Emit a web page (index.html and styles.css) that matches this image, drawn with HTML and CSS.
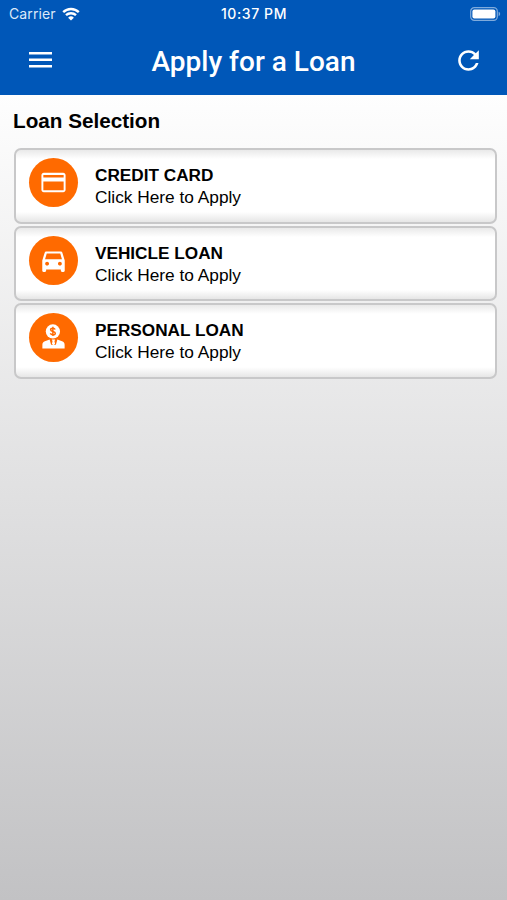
FILE: index.html
```html
<!DOCTYPE html>
<html lang="en">
<head>
    <meta charset="UTF-8">
    <meta name="viewport" content="width=device-width, initial-scale=1"/>
    <title>Apply for a Loan</title>
    <link rel="stylesheet" href="styles.css">
</head>
<body>
    <header class="header">
        <div class="status-bar">
            <div class="carrier">
                <span>Carrier</span>
                <svg class="wifi" viewBox="0 0 18 14">
                    <path d="M1.2 5.2a11.2 11.2 0 0 1 15.6 0M4 8.2a7.2 7.2 0 0 1 10 0"/>
                    <path class="wifi-dot" d="M9 13.6L6.1 10.7a4.1 4.1 0 0 1 5.8 0z"/>
                </svg>
            </div>
            <span class="time">10:37 PM</span>
            <div class="battery-wrap">
                <svg class="battery" viewBox="0 0 31 14">
                    <rect class="battery-case" x="0.7" y="0.7" width="26.6" height="12.6" rx="3.6"/>
                    <rect x="2.4" y="2.4" width="23" height="9.2" rx="2"/>
                    <path class="battery-tip" d="M28.6 4.8q1.6.6 1.6 2.2t-1.6 2.2z"/>
                </svg>
            </div>
        </div>
        <nav class="nav-bar">
            <a class="nav-btn" href="#" aria-label="Menu">
                <svg class="icon-menu" viewBox="0 0 23 16"><path d="M0 0h23v2.6H0zM0 6.5h23v2.6H0zM0 13h23v2.6H0z"/></svg>
            </a>
            <h1 class="title">Apply for a Loan</h1>
            <a class="nav-btn" href="#" aria-label="Refresh">
                <svg class="icon-refresh" viewBox="0 0 24 24"><path d="M17.65 6.35C16.2 4.9 14.21 4 12 4c-4.42 0-7.99 3.58-7.99 8s3.57 8 7.99 8c3.73 0 6.84-2.55 7.73-6h-2.08c-.82 2.33-3.04 4-5.65 4-3.31 0-6-2.69-6-6s2.69-6 6-6c1.66 0 3.14.69 4.22 1.78L13 11h7V4l-2.35 2.35z"/></svg>
            </a>
        </nav>
    </header>

    <main class="content">
        <h2 class="section-title">Loan Selection</h2>
        <ul class="loan-list">
            <li class="loan-item">
                <span class="loan-icon">
                    <svg viewBox="0 0 24 24"><path d="M20 4H4c-1.11 0-1.99.89-1.99 2L2 18c0 1.11.89 2 2 2h16c1.11 0 2-.89 2-2V6c0-1.11-.89-2-2-2zm.4 14.4H3.6V11.2h16.8v7.2zm0-10.600H3.600V5.800h16.800v2z"/></svg>
                </span>
                <div class="loan-text">
                    <strong class="loan-name">CREDIT CARD</strong>
                    <span class="loan-hint">Click Here to Apply</span>
                </div>
            </li>
            <li class="loan-item">
                <span class="loan-icon">
                    <svg viewBox="0 0 24 24"><path d="M19.300 5.400C19.100 4.900 18.600 4.500 17.900 4.500H6.100c-.66 0-1.200.4-1.400 1L2.700 12v8.500c0 .55.450 1 1 1h1.200c.55 0 1-.450 1-1v-1h12.200v1c0 .55.450 1 1 1h1.200c.55 0 1-.450 1-1V12l-2-6.600zM6.700 16.200c-.9 0-1.600-.7-1.600-1.600s.7-1.600 1.600-1.600 1.600.7 1.600 1.600-.7 1.600-1.600 1.600zm10.600 0c-.9 0-1.600-.7-1.600-1.600s.7-1.600 1.600-1.600 1.600.7 1.600 1.600-.7 1.600-1.600 1.600zM5 11l1.400-4.700h11.200L19 11H5z"/></svg>
                </span>
                <div class="loan-text">
                    <strong class="loan-name">VEHICLE LOAN</strong>
                    <span class="loan-hint">Click Here to Apply</span>
                </div>
            </li>
            <li class="loan-item">
                <span class="loan-icon">
                    <svg viewBox="0 0 24 24">
                        <circle cx="11.5" cy="7" r="5.9"/>
                        <path class="coin-sign" d="M13.4 5.4C13 4.5 12.3 4.300 11.500 4.300c-1.100 0-1.900.5-1.900 1.300 0 1.900 3.900.9 3.900 2.800 0 .8-.8 1.300-2 1.300-1 0-1.800-.4-2.100-1.200M11.500 3.200v7.600"/>
                        <path d="M2.800 21v-3c0-1.500.8-2.300 2.100-2.800l3.900-1.500L10 18h4l1.200-4.300 3.900 1.500c1.300.5 2.100 1.300 2.100 2.800v3z"/>
                        <path d="M10.600 13.700h2.800l-.6 1.300.5 2.200-1.300 1.200-1.300-1.200.5-2.200z"/>
                    </svg>
                </span>
                <div class="loan-text">
                    <strong class="loan-name">PERSONAL LOAN</strong>
                    <span class="loan-hint">Click Here to Apply</span>
                </div>
            </li>
        </ul>
    </main>
</body>
</html>
```
FILE: styles.css
```css
*{
    box-sizing: border-box;
}
body{
    margin: 0;
    height: 900px;
    overflow: hidden;
    font-family: "Liberation Sans", Arial, sans-serif;
    color: #000;
    background: linear-gradient(#fefefe 95px, #c2c2c4 900px);
}
.header{
    height: 95px;
    color: #fff;
    background-color: #0057b8;
}
.header svg{
    display: block;
    fill: #fff;
}
.status-bar{
    display: grid;
    grid-template-columns: 1fr auto 1fr;
    align-items: center;
    height: 27px;
    padding: 0 6px 0 9px;
    font-family: Inter, sans-serif;
    font-size: 14px;
}
.carrier{
    display: flex;
    align-items: center;
    gap: 6px;
    color: #dce9f8;
    letter-spacing: 0.1px;
}
.wifi{
    width: 18px;
    height: 14px;
}
.header .wifi path{
    fill: none;
    stroke: #fff;
    stroke-width: 2.4;
}
.header .wifi .wifi-dot{
    fill: #fff;
    stroke: none;
}
.time{
    margin-right: 2px;
    font-weight: 500;
    letter-spacing: 0.6px;
}
.battery-wrap{
    display: flex;
    justify-content: flex-end;
}
.battery{
    width: 31px;
    height: 14px;
}
.header .battery-case{
    fill: none;
    stroke: #7fabdc;
    stroke-width: 1.2;
}
.header .battery-tip{
    fill: #7fabdc;
}
.nav-bar{
    display: flex;
    align-items: center;
    justify-content: space-between;
    height: 66px;
    padding: 0 23px 0 29px;
}
.icon-menu{
    width: 23px;
    height: 16px;
}
.icon-refresh{
    width: 31px;
    height: 31px;
}
.title{
    margin: 0;
    padding: 4px 0 0 2px;
    font-family: Roboto, sans-serif;
    font-size: 28px;
    font-weight: 500;
    line-height: 32px;
}
.content{
    padding: 14px 10px 0 13px;
}
.section-title{
    margin: 0;
    font-size: 20.7px;
    line-height: 24px;
}
.loan-list{
    display: flex;
    flex-direction: column;
    gap: 2px;
    margin: 15px 0 0 1px;
    padding: 0;
    list-style: none;
}
.loan-item{
    display: flex;
    align-items: flex-start;
    gap: 17px;
    height: 75.5px;
    padding: 8px 13px;
    border: 2px solid #c8c8c9;
    border-radius: 7px;
    background: linear-gradient(#e9e9e9, #fff 9px, #fff 62px, #e6e6e6);
}
.loan-icon{
    display: flex;
    align-items: center;
    justify-content: center;
    width: 49px;
    height: 49px;
    border-radius: 50%;
    background-color: #ff6a00;
}
.loan-icon svg{
    width: 29px;
    height: 29px;
    fill: #fff;
}
.loan-icon .coin-sign{
    fill: none;
    stroke: #ff6a00;
    stroke-width: 1.2;
}
.loan-text{
    display: flex;
    flex-direction: column;
    padding-top: 6px;
}
.loan-name{
    font-size: 17.2px;
    line-height: 22px;
}
.loan-hint{
    font-size: 17.3px;
    line-height: 23px;
}
```
